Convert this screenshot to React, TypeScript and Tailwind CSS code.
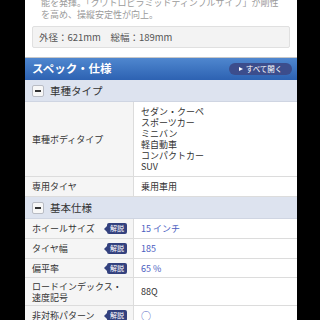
import type { ReactNode } from "react";

const font = { fontFamily: '"Noto Sans CJK JP", "Noto Sans", sans-serif' };

const Badge = () => (
	<div className="flex items-center shrink-0">
		<div className="w-0 h-0 border-y-[3px] border-y-transparent border-r-[3px] border-r-[#33417e]" />
		<div className="bg-[#33417e] text-white text-[7px] leading-none rounded-[2px] px-[3px] py-[2px]">
			解説
		</div>
	</div>
);

const Section = ({ title }: { title: string }) => (
	<div className="h-[22px] bg-[#dde3ef] border-b border-[#cfd5e2] flex items-center pl-[7px] gap-[6px]">
		<div className="w-[12px] h-[12px] rounded-[2px] bg-[#f7f7f7] border border-[#b9bcc4] flex items-center justify-center">
			<div className="w-[6px] h-[2px] bg-[#333]" />
		</div>
		<span className="text-[10.5px] text-[#333]">{title}</span>
	</div>
);

interface RowProps {
	label: ReactNode;
	badge?: boolean;
	h: string;
	children: ReactNode;
	blue?: boolean;
}

const Row = ({ label, badge, h, children, blue }: RowProps) => (
	<div className={`flex border-b border-[#dcdcdc] ${h}`}>
		<div className="w-[109px] shrink-0 bg-[#f5f5f5] border-r border-[#dcdcdc] flex items-center justify-between pl-[7px] pr-[6px] text-[9px] leading-[11px] text-[#333]">
			<div>{label}</div>
			{badge && <Badge />}
		</div>
		<div
			className={`flex-1 flex items-center pl-[7px] text-[9px] leading-[11px] ${blue ? "text-[#4a5cc0]" : "text-[#333]"}`}
		>
			{children}
		</div>
	</div>
);

export default function App() {
	return (
		<div className="w-[320px] h-[320px] bg-black overflow-hidden pl-[25px]" style={font}>
			<div className="w-[272px] h-[320px] bg-white overflow-hidden">
				<div className="px-[7px] border-b border-[#c8c8c8]">
					<div className="-mt-[3px] pl-[9px] text-[9px] leading-[12px] text-[#9a9a9a] whitespace-nowrap">
						<div>能を発揮。「クワトロピラミッドディンプルサイプ」が剛性</div>
						<div>を高め、操縦安定性が向上。</div>
					</div>
					<div className="mt-[5px] mb-[9px] h-[22px] bg-[#f3f3f3] border border-[#e0e0e0] rounded-[2px] flex items-center pl-[6px] text-[9.5px] text-[#555] whitespace-pre">
						外径：621mm　総幅：189mm
					</div>
				</div>
				<div className="h-[22px] bg-gradient-to-b from-[#4f87cf] to-[#2d62b2] flex items-center justify-between pl-[7px] pr-[5px]">
					<span className="text-white text-[11.5px] font-bold">スペック・仕様</span>
					<div className="h-[12px] w-[63px] rounded-full bg-[#3c4d8c] flex items-center justify-center gap-[3px]">
						<div className="w-0 h-0 border-y-[2.5px] border-y-transparent border-l-[4px] border-l-white" />
						<span className="text-white text-[7.5px] leading-none">すべて開く</span>
					</div>
				</div>
				<Section title="車種タイプ" />
				<Row label="車種ボディタイプ" h="h-[75px]">
					<div>
						<div>セダン・クーペ</div>
						<div>スポーツカー</div>
						<div>ミニバン</div>
						<div>軽自動車</div>
						<div>コンパクトカー</div>
						<div>SUV</div>
					</div>
				</Row>
				<Row label="専用タイヤ" h="h-[20px]">
					乗用車用
				</Row>
				<Section title="基本仕様" />
				<Row label="ホイールサイズ" badge blue h="h-[20px]">
					15 インチ
				</Row>
				<Row label="タイヤ幅" badge blue h="h-[20px]">
					185
				</Row>
				<Row label="偏平率" badge blue h="h-[19px]">
					65 %
				</Row>
				<Row
					label={
						<>
							<div>ロードインデックス・</div>
							<div>速度記号</div>
						</>
					}
					h="h-[28px]"
				>
					88Q
				</Row>
				<Row label="非対称パターン" badge blue h="h-[20px]">
					<span className="text-[10px]">○</span>
				</Row>
			</div>
		</div>
	);
}
